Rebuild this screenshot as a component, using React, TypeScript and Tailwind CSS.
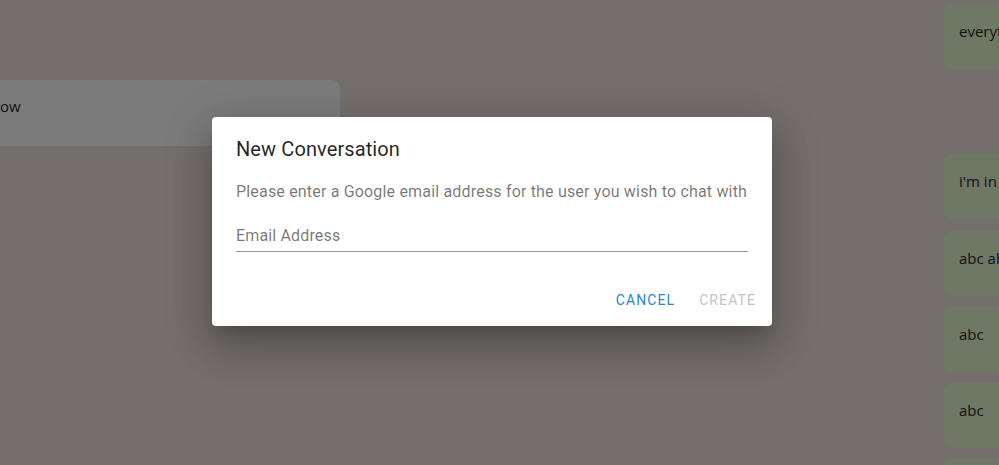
import React from "react";

const rightMessages = [
  { text: "everything", mt: "mt-[4px]" },
  { text: "i'm in", mt: "mt-[85px]" },
  { text: "abc abc", mt: "mt-[12px]" },
  { text: "abc", mt: "mt-[11px]" },
  { text: "abc", mt: "mt-[11px]" },
  { text: "abc", mt: "mt-[11px]" },
];

export default function App() {
  return (
    <div className="relative h-[465px] w-[999px] overflow-hidden bg-[#746f6c] font-['Open_Sans',sans-serif]">
      {/* chat behind the overlay */}
      <div className="flex h-full w-full justify-between">
        <div className="pt-[80px]">
          <div className="ml-[-20px] h-[66px] w-[360px] rounded-lg bg-[#7b7b7b] px-5 pt-[15px] text-[15px] text-[#111]">
            ow
          </div>
        </div>
        <div className="flex w-[55px] flex-col">
          {rightMessages.map((m, i) => (
            <div
              key={i}
              className={`${m.mt} h-[65px] w-[120px] shrink-0 whitespace-nowrap rounded-lg bg-[#6e7865] pl-[15px] pt-[16px] text-[15px] text-[#111]`}
            >
              {m.text}
            </div>
          ))}
        </div>
      </div>

      {/* dialog */}
      <div className="absolute left-[212px] top-[117px] flex h-[209px] w-[560px] flex-col rounded bg-white font-['Roboto',sans-serif] shadow-[0_11px_15px_-7px_rgba(0,0,0,0.2),0_24px_38px_3px_rgba(0,0,0,0.14),0_9px_46px_8px_rgba(0,0,0,0.12)]">
        <h2 className="px-6 pt-[16px] text-[20px] leading-[32px] tracking-[0.1px] text-[rgba(0,0,0,0.87)]">
          New Conversation
        </h2>
        <div className="px-6 pt-[15px]">
          <p className="whitespace-nowrap text-[16px] leading-[24px] tracking-[0.18px] text-[rgba(0,0,0,0.54)]">
            Please enter a Google email address for the user you wish to chat with
          </p>
          <div className="mt-[22px] border-b border-[#949494] pb-[6px] text-[16px] leading-[19px] tracking-[0.15px] text-[rgba(0,0,0,0.54)]">
            Email Address
          </div>
        </div>
        <div className="mt-auto flex justify-end gap-[8px] pb-[8px] pr-[8px]">
          <button className="h-[36px] min-w-[64px] px-2 text-[14px] font-normal uppercase tracking-[1.1px] text-[#2a84d6]">
            Cancel
          </button>
          <button className="h-[36px] min-w-[64px] px-2 text-[14px] font-normal uppercase tracking-[1.1px] text-[#c4c4c4]">
            Create
          </button>
        </div>
      </div>
    </div>
  );
}
